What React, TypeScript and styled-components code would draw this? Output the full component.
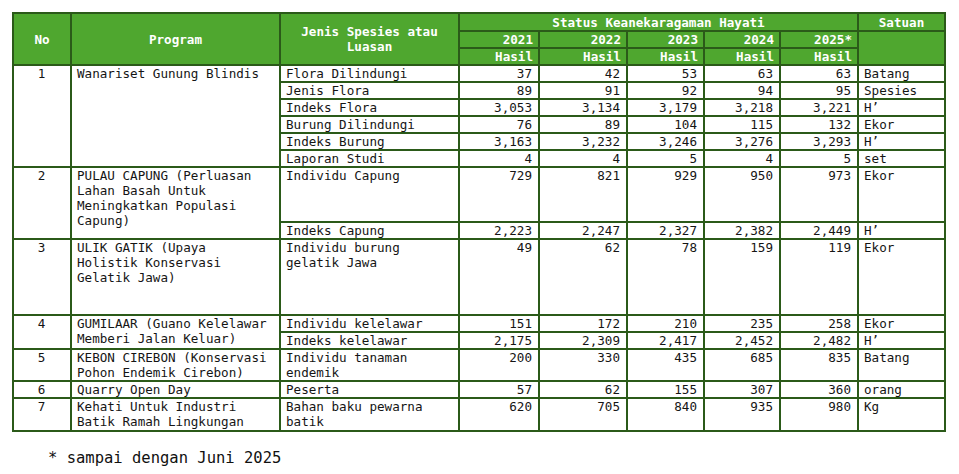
import React from 'react';
import styled, { createGlobalStyle } from 'styled-components';

const GlobalStyle = createGlobalStyle`
  body {
    margin: 0;
    background: #ffffff;
    font-family: 'DejaVu Sans Mono', 'Liberation Mono', monospace;
  }
`;

const Page = styled.div`
  padding: 12px 0 0 12px;
`;

const Table = styled.table`
  border-collapse: separate;
  border-spacing: 0;
  table-layout: fixed;
  width: 934px;
  border-top: 2px solid #2b5a19;
  border-left: 2px solid #2b5a19;
  font-size: 12.6px;
  line-height: 15px;
  color: #151515;
`;

const Th = styled.th<{ $align?: 'left' | 'center' | 'right' }>`
  background: #4fa72f;
  color: #ffffff;
  font-weight: bold;
  text-align: ${({ $align }) => $align || 'center'};
  vertical-align: middle;
  padding: 0 5px;
  border-right: 2px solid #2b5a19;
  border-bottom: 2px solid #2b5a19;
  white-space: nowrap;
`;

const Td = styled.td<{ $align?: 'left' | 'center' | 'right' }>`
  text-align: ${({ $align }) => $align || 'left'};
  vertical-align: top;
  padding: 0 6px 0 5px;
  border-right: 2px solid #2b5a19;
  border-bottom: 2px solid #2b5a19;
  white-space: pre-line;
  overflow: hidden;
`;

const Footnote = styled.div`
  margin: 17px 0 0 36px;
  font-size: 15.5px;
  color: #111;
`;

type Item = { label: string; values: string[]; unit: string; h: number };
type Program = { no: string; name: string; items: Item[] };

const programs: Program[] = [
  {
    no: '1',
    name: 'Wanariset Gunung Blindis',
    items: [
      { label: 'Flora Dilindungi', values: ['37', '42', '53', '63', '63'], unit: 'Batang', h: 17 },
      { label: 'Jenis Flora', values: ['89', '91', '92', '94', '95'], unit: 'Spesies', h: 17 },
      { label: 'Indeks Flora', values: ['3,053', '3,134', '3,179', '3,218', '3,221'], unit: 'H\u2019', h: 17 },
      { label: 'Burung Dilindungi', values: ['76', '89', '104', '115', '132'], unit: 'Ekor', h: 17 },
      { label: 'Indeks Burung', values: ['3,163', '3,232', '3,246', '3,276', '3,293'], unit: 'H\u2019', h: 17 },
      { label: 'Laporan Studi', values: ['4', '4', '5', '4', '5'], unit: 'set', h: 17 },
    ],
  },
  {
    no: '2',
    name: 'PULAU CAPUNG (Perluasan\nLahan Basah Untuk\nMeningkatkan Populasi\nCapung)',
    items: [
      { label: 'Individu Capung', values: ['729', '821', '929', '950', '973'], unit: 'Ekor', h: 55 },
      { label: 'Indeks Capung', values: ['2,223', '2,247', '2,327', '2,382', '2,449'], unit: 'H\u2019', h: 17 },
    ],
  },
  {
    no: '3',
    name: 'ULIK GATIK (Upaya\nHolistik Konservasi\nGelatik Jawa)',
    items: [
      { label: 'Individu burung\ngelatik Jawa', values: ['49', '62', '78', '159', '119'], unit: 'Ekor', h: 76 },
    ],
  },
  {
    no: '4',
    name: 'GUMILAAR (Guano Kelelawar\nMemberi Jalan Keluar)',
    items: [
      { label: 'Individu kelelawar', values: ['151', '172', '210', '235', '258'], unit: 'Ekor', h: 17 },
      { label: 'Indeks kelelawar', values: ['2,175', '2,309', '2,417', '2,452', '2,482'], unit: 'H\u2019', h: 17 },
    ],
  },
  {
    no: '5',
    name: 'KEBON CIREBON (Konservasi\nPohon Endemik Cirebon)',
    items: [
      { label: 'Individu tanaman\nendemik', values: ['200', '330', '435', '685', '835'], unit: 'Batang', h: 32 },
    ],
  },
  {
    no: '6',
    name: 'Quarry Open Day',
    items: [{ label: 'Peserta', values: ['57', '62', '155', '307', '360'], unit: 'orang', h: 17 }],
  },
  {
    no: '7',
    name: 'Kehati Untuk Industri\nBatik Ramah Lingkungan',
    items: [
      { label: 'Bahan baku pewarna\nbatik', values: ['620', '705', '840', '935', '980'], unit: 'Kg', h: 33 },
    ],
  },
];

const years = ['2021', '2022', '2023', '2024', '2025*'];
const colWidths = [58, 209, 179, 80, 88, 77, 76, 78, 87];

export default function App() {
  return (
    <Page>
      <GlobalStyle />
      <Table>
        <colgroup>
          {colWidths.map((w, i) => (
            <col key={i} style={{ width: w }} />
          ))}
        </colgroup>
        <thead>
          <tr style={{ height: 18 }}>
            <Th rowSpan={3}>No</Th>
            <Th rowSpan={3}>Program</Th>
            <Th rowSpan={3} style={{ whiteSpace: 'normal' }}>
              Jenis Spesies atau Luasan
            </Th>
            <Th colSpan={5}>Status Keanekaragaman Hayati</Th>
            <Th>Satuan</Th>
          </tr>
          <tr style={{ height: 16 }}>
            {years.map((y) => (
              <Th key={y} $align="right">
                {y}
              </Th>
            ))}
            <Th rowSpan={2} />
          </tr>
          <tr style={{ height: 17 }}>
            {years.map((y) => (
              <Th key={y} $align="right">
                Hasil
              </Th>
            ))}
          </tr>
        </thead>
        <tbody>
          {programs.map((p) =>
            p.items.map((it, i) => (
              <tr key={p.no + it.label} style={{ height: it.h }}>
                {i === 0 && (
                  <>
                    <Td rowSpan={p.items.length} $align="center">
                      {p.no}
                    </Td>
                    <Td rowSpan={p.items.length}>{p.name}</Td>
                  </>
                )}
                <Td>{it.label}</Td>
                {it.values.map((v, j) => (
                  <Td key={j} $align="right">
                    {v}
                  </Td>
                ))}
                <Td>{it.unit}</Td>
              </tr>
            ))
          )}
        </tbody>
      </Table>
      <Footnote>* sampai dengan Juni 2025</Footnote>
    </Page>
  );
}
